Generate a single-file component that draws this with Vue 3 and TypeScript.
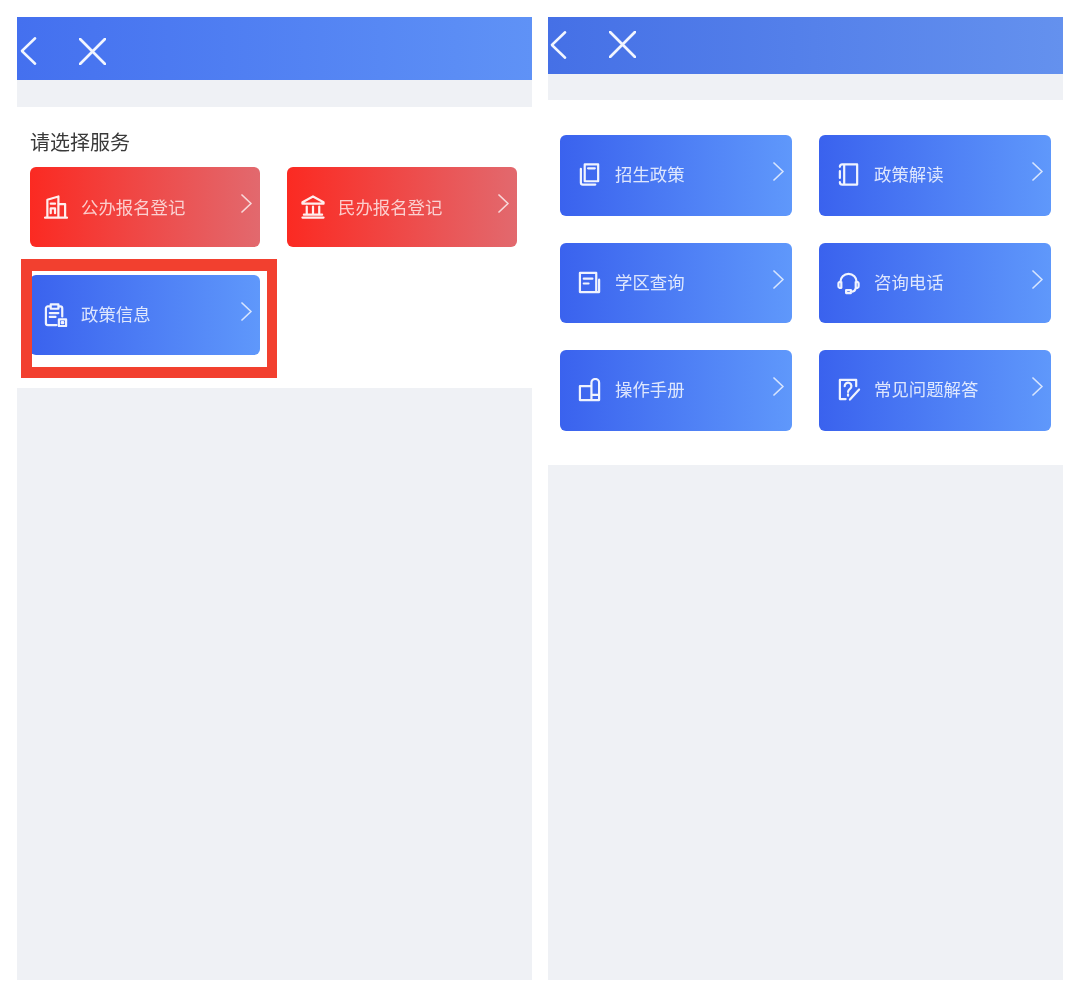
<script setup lang="ts">
interface Service {
  label: string;
  icon: string;
}

const icons = {
  building: "M1 23.500h23M3.500 23.500V5L15 1.500v22M15 9.500h7v14M7 9h4.500M7 14h4.500M7 14v5M11.500 14v5",
  bank: "M12.500 1.500 23.500 7.500v1.500h-22V7.500zM6 12v7M12.500 12v7M19 12v7M3 20.500h19M1.500 23.500h22",
  clipboard:
    "M7 3.500H4a2 2 0 0 0-2 2V21a2 2 0 0 0 2 2h9M15 3.500h2a2 2 0 0 1 2 2V14M7 1.500h8v4.500H7zM6 10.500h9M6 14.500h6M15.500 17h7.500v7h-7.500zM18.500 20h1.500v1h-1.500z",
  book: "M7 1.500h14v17.500H7zM10.500 5.500h7M3 6v14.500a2 2 0 0 0 2 2h13",
  notebook: "M7.500 1.500H21v21H7.500zM3 4q0-2.500 2.500-2.500h2M3 8.500v7M3 20q0 2.500 2.500 2.500h2",
  district: "M19 22V2H2v20h20V9M6 8h9M6 13h5",
  headset:
    "M3.500 11.500a8.500 8.500 0 0 1 17 0M2.500 11.500h2v6h-2a1.500 1.500 0 0 1-1-1.500v-3a1.500 1.500 0 0 1 1-1.500zM19.500 11.500h2a1.500 1.500 0 0 1 1 1.500v3a1.500 1.500 0 0 1-1 1.500h-2zM19.500 17.500q-.5 4-5 4.200M9.500 20h5v3h-5z",
  manual: "M14 8.500H2v14.500h12M14 23V5a4 4 0 0 1 8 0v18zM14 17.500h8",
  question:
    "M20 8.500V2H3v20h6M8 8.500a3.500 3.500 0 1 1 5.500 2.800c-1.200.9-2 1.500-2 3.200M11.500 17v1.500M13.500 22.500 23 12",
};

const serviceRows: Service[] = [
  { label: "公办报名登记", icon: icons.building },
  { label: "民办报名登记", icon: icons.bank },
];

const policyEntry: Service = { label: "政策信息", icon: icons.clipboard };

const policyItems: Service[] = [
  { label: "招生政策", icon: icons.book },
  { label: "政策解读", icon: icons.notebook },
  { label: "学区查询", icon: icons.district },
  { label: "咨询电话", icon: icons.headset },
  { label: "操作手册", icon: icons.manual },
  { label: "常见问题解答", icon: icons.question },
];
</script>

<template>
  <div class="page">
    <!-- 左侧:请选择服务 -->
    <section class="screen">
      <header class="topbar topbar-left">
        <svg class="nav-back" viewBox="0 0 18 30"><path d="M16 1.500 2 15l14 13.500" /></svg>
        <svg class="nav-close" viewBox="0 0 26 26"><path d="M1 1l24 24M25 1 1 25" /></svg>
      </header>
      <div class="strip"></div>
      <div class="panel panel-left">
        <h2 class="panel-title">请选择服务</h2>
        <div class="card-grid card-grid-left">
          <a v-for="item in serviceRows" :key="item.label" class="card card-red">
            <svg class="card-icon" viewBox="0 0 25 25"><path :d="item.icon" /></svg>
            <span class="card-label">{{ item.label }}</span>
            <svg class="card-arrow" viewBox="0 0 11 19"><path d="M1 1l9 8.500-9 8.500" /></svg>
          </a>
          <a class="card card-blue card-entry">
            <svg class="card-icon" viewBox="0 0 25 25"><path :d="policyEntry.icon" /></svg>
            <span class="card-label">{{ policyEntry.label }}</span>
            <svg class="card-arrow" viewBox="0 0 11 19"><path d="M1 1l9 8.500-9 8.500" /></svg>
          </a>
        </div>
        <!-- 红色标注框 -->
        <div class="highlight"></div>
      </div>
      <div class="filler"></div>
    </section>

    <!-- 右侧:政策信息 -->
    <section class="screen">
      <header class="topbar topbar-right">
        <svg class="nav-back" viewBox="0 0 18 30"><path d="M16 1.500 2 15l14 13.500" /></svg>
        <svg class="nav-close" viewBox="0 0 26 26"><path d="M1 1l24 24M25 1 1 25" /></svg>
      </header>
      <div class="strip"></div>
      <div class="panel panel-right">
        <div class="card-grid card-grid-right">
          <a v-for="item in policyItems" :key="item.label" class="card card-blue card-wide">
            <svg class="card-icon" viewBox="0 0 25 25"><path :d="item.icon" /></svg>
            <span class="card-label">{{ item.label }}</span>
            <svg class="card-arrow" viewBox="0 0 11 19"><path d="M1 1l9 8.500-9 8.500" /></svg>
          </a>
        </div>
      </div>
      <div class="filler"></div>
    </section>
  </div>
</template>

<style>
html,
body {
  margin: 0;
  background: #fff;
}
</style>

<style scoped>
.page {
  display: flex;
  gap: 16px;
  box-sizing: border-box;
  width: 1080px;
  height: 997px;
  padding: 17px 17px 17px;
  font-family: "Noto Sans CJK SC", "Noto Sans", sans-serif;
  background: #fff;
}

.screen {
  display: flex;
  flex-direction: column;
  width: 515px;
  flex: none;
}

.topbar {
  display: flex;
  align-items: center;
  flex: none;
  box-sizing: border-box;
}

.topbar-left {
  height: 63px;
  padding: 5px 0 0 3px;
  background: linear-gradient(90deg, #4470ef, #5f92f6);
}

.topbar-left .nav-close {
  margin-left: 42px;
}

.topbar-right {
  height: 57px;
  padding: 0 0 2px 2px;
  background: linear-gradient(90deg, #4570e6, #6491ee);
}

.topbar-right .nav-close {
  margin-left: 42px;
}

.nav-back {
  width: 17px;
  height: 30px;
  flex: none;
}

.nav-close {
  width: 27px;
  height: 27px;
  flex: none;
}

.nav-back path,
.nav-close path {
  fill: none;
  stroke: #f2f6ff;
  stroke-width: 2.6;
  stroke-linecap: round;
  stroke-linejoin: round;
}

.strip {
  height: 27px;
  flex: none;
  background: #eff1f5;
}

.topbar-right + .strip {
  height: 26px;
}

.panel {
  position: relative;
  flex: none;
  box-sizing: border-box;
  background: #fff;
}

.panel-left {
  height: 281px;
  padding: 22px 0 0 13px;
}

.panel-right {
  height: 365px;
  padding: 35px 0 0 12px;
}

.panel-title {
  margin: 0 0 12px;
  font-size: 20px;
  line-height: 26px;
  font-weight: 400;
  color: #3a3a3a;
  filter: blur(0.3px);
}

.card-grid {
  display: grid;
}

.card-grid-left {
  grid-template-columns: 230px 230px;
  grid-auto-rows: 80px;
  gap: 28px 27px;
}

.card-grid-right {
  grid-template-columns: 232px 232px;
  grid-auto-rows: 80.5px;
  gap: 27px;
}

.card {
  display: flex;
  align-items: center;
  box-sizing: border-box;
  padding: 0 8px 0 14px;
  border-radius: 6px;
  color: rgba(255, 255, 255, 0.82);
}

.card-wide {
  padding-left: 18px;
}

.card-wide .card-label,
.card-entry .card-label {
  margin-bottom: 2px;
}

.card-red {
  background: linear-gradient(90deg, #fb2a22, #e2696e);
  color: rgba(255, 255, 255, 0.74);
}

.card-blue {
  background: linear-gradient(90deg, #3a62ee, #5f98fb);
}

.card-icon {
  width: 24px;
  height: 24px;
  flex: none;
  margin-right: 13px;
  filter: blur(0.3px);
}

.card-icon path {
  fill: none;
  stroke: rgba(255, 255, 255, 0.92);
  stroke-width: 2.3;
  stroke-linecap: round;
  stroke-linejoin: round;
}

.card-label {
  font-size: 17.4px;
  line-height: 24px;
  white-space: nowrap;
  filter: blur(0.3px);
}

.card-arrow {
  width: 11px;
  height: 19px;
  flex: none;
  margin: 0 0 7px auto;
}

.card-arrow path {
  fill: none;
  stroke: rgba(255, 255, 255, 0.75);
  stroke-width: 1.7;
  stroke-linecap: round;
  stroke-linejoin: round;
}

/* 标注框盖在卡片之上 */
.highlight {
  position: absolute;
  left: 4px;
  top: 152px;
  box-sizing: border-box;
  width: 256px;
  height: 119px;
  border-style: solid;
  border-color: #f2402f;
  border-width: 12px 10px 11px 11px;
  pointer-events: none;
}

.filler {
  flex: 1;
  background: #eff1f5;
}
</style>
